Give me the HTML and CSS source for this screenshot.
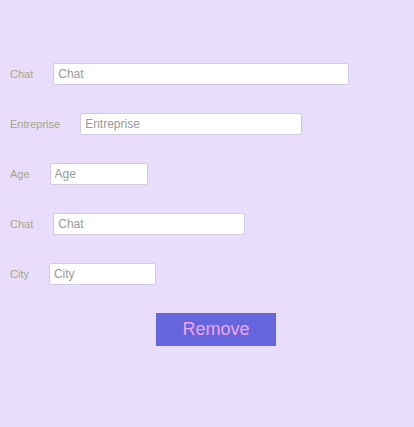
FILE: index.html
```html
<!DOCTYPE html>
<html>
<head>
<meta charset="utf-8">
<link rel="stylesheet" href="styles.css">
</head>
<body>
<div class="page">
  <div class="row"><label class="lbl">Chat</label><input class="field w-chat" placeholder="Chat"></div>
  <div class="row"><label class="lbl">Entreprise</label><input class="field w-ent" placeholder="Entreprise"></div>
  <div class="row"><label class="lbl">Age</label><input class="field w-age" placeholder="Age"></div>
  <div class="row"><label class="lbl">Chat</label><input class="field w-chat2" placeholder="Chat"></div>
  <div class="row"><label class="lbl">City</label><input class="field w-city" placeholder="City"></div>
  <button class="remove">Remove</button>
</div>
</body>
</html>
```
FILE: styles.css
```css
html, body {
  margin: 0;
  padding: 0;
  background: #e8defc;
  height: 100%;
}
.page {
  padding: 63px 0 0 10px;
  display: flex;
  flex-direction: column;
  align-items: flex-start;
  font-family: "Liberation Sans", Arial, sans-serif;
}
.row {
  display: flex;
  align-items: center;
  gap: 20px;
  height: 22px;
  margin-bottom: 28px;
}
.lbl {
  font-size: 11px;
  color: #a6a68a;
}
.field {
  box-sizing: border-box;
  height: 22px;
  margin: 0;
  padding: 0 4px;
  border: 1px solid #d3cce0;
  border-radius: 2px;
  background: #ffffff;
  font-family: "Liberation Sans", Arial, sans-serif;
  font-size: 12px;
  color: #555;
  outline: none;
}
.field::placeholder {
  color: #9a9a9a;
}
.w-chat { width: 296px; }
.w-ent { width: 222px; }
.w-age { width: 98px; }
.w-chat2 { width: 192px; }
.w-city { width: 107px; }
.remove {
  margin: 0 0 0 146px;
  width: 120px;
  height: 33px;
  padding: 0;
  border: none;
  background: #6565dd;
  color: #f0a4f0;
  font-family: "Liberation Sans", Arial, sans-serif;
  font-size: 18px;
}
```
